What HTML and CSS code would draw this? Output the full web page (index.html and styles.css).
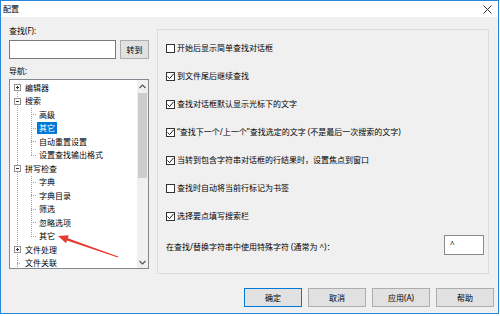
FILE: index.html
```html
<!DOCTYPE html>
<html lang="zh-CN">
<head>
<meta charset="utf-8">
<title>配置</title>
<link rel="stylesheet" href="styles.css">
</head>
<body>
<div class="window">
  <div class="titlebar">
    <span class="title">配置</span>
    <svg class="close" width="9" height="9" viewBox="0 0 9 9"><path d="M0.5 0.5L8.5 8.5M8.5 0.5L0.5 8.5" stroke="#333" stroke-width="1"/></svg>
  </div>
  <div class="content">
    <div class="left">
      <div class="label first">查找(F):</div>
      <div class="findrow">
        <div class="input"></div>
        <div class="btn small">转到</div>
      </div>
      <div class="label nav">导航:</div>
      <div class="tree">
        <div class="tree-list">
          <div class="row root"><svg class="exp" width="7" height="7" viewBox="0 0 7 7"><rect x="0.5" y="0.5" width="6" height="6" fill="#fff" stroke="#919191"/><path d="M2 3.5H5M3.5 2V5" stroke="#333"/></svg><span class="lbl">编辑器</span></div>
          <div class="row root"><svg class="exp" width="7" height="7" viewBox="0 0 7 7"><rect x="0.5" y="0.5" width="6" height="6" fill="#fff" stroke="#919191"/><path d="M2 3.5H5" stroke="#333"/></svg><span class="lbl">搜索</span></div>
          <div class="children">
            <div class="row child"><span class="stub"></span><span class="lbl">高级</span></div>
            <div class="row child"><span class="stub"></span><span class="lbl sel">其它</span></div>
            <div class="row child"><span class="stub"></span><span class="lbl">自动重置设置</span></div>
            <div class="row child"><span class="stub"></span><span class="lbl">设置查找输出格式</span></div>
          </div>
          <div class="row root"><svg class="exp" width="7" height="7" viewBox="0 0 7 7"><rect x="0.5" y="0.5" width="6" height="6" fill="#fff" stroke="#919191"/><path d="M2 3.5H5" stroke="#333"/></svg><span class="lbl">拼写检查</span></div>
          <div class="children">
            <div class="row child"><span class="stub"></span><span class="lbl">字典</span></div>
            <div class="row child"><span class="stub"></span><span class="lbl">字典目录</span></div>
            <div class="row child"><span class="stub"></span><span class="lbl">筛选</span></div>
            <div class="row child"><span class="stub"></span><span class="lbl">忽略选项</span></div>
            <div class="row child"><span class="stub"></span><span class="lbl">其它</span></div>
          </div>
          <div class="row root"><svg class="exp" width="7" height="7" viewBox="0 0 7 7"><rect x="0.5" y="0.5" width="6" height="6" fill="#fff" stroke="#919191"/><path d="M2 3.5H5M3.5 2V5" stroke="#333"/></svg><span class="lbl">文件处理</span></div>
          <div class="row root leaf"><span class="rstub"></span><span class="lbl">文件关联</span></div>
        </div>
        <div class="scrollbar">
          <svg class="arrow" width="7" height="5" viewBox="0 0 7 5"><path d="M0.5 4L3.5 1L6.5 4" fill="none" stroke="#555" stroke-width="1.2"/></svg>
          <div class="track"><div class="thumb"></div></div>
          <svg class="arrow" width="7" height="5" viewBox="0 0 7 5"><path d="M0.5 1L3.5 4L6.5 1" fill="none" stroke="#555" stroke-width="1.2"/></svg>
        </div>
      </div>
    </div>
    <div class="group">
      <div class="check"><span class="box"></span><span>开始后显示简单查找对话框</span></div>
      <div class="check"><span class="box"><svg width="9" height="9" viewBox="0 0 9 9"><path d="M1.5 4.5L3.6 6.6L7.6 1.8" fill="none" stroke="#222" stroke-width="1"/></svg></span><span>到文件尾后继续查找</span></div>
      <div class="check"><span class="box"><svg width="9" height="9" viewBox="0 0 9 9"><path d="M1.5 4.5L3.6 6.6L7.6 1.8" fill="none" stroke="#222" stroke-width="1"/></svg></span><span>查找对话框默认显示光标下的文字</span></div>
      <div class="check"><span class="box"><svg width="9" height="9" viewBox="0 0 9 9"><path d="M1.5 4.5L3.6 6.6L7.6 1.8" fill="none" stroke="#222" stroke-width="1"/></svg></span><span>“查找下一个/上一个”查找选定的文字 (不是最后一次搜索的文字)</span></div>
      <div class="check"><span class="box"><svg width="9" height="9" viewBox="0 0 9 9"><path d="M1.5 4.5L3.6 6.6L7.6 1.8" fill="none" stroke="#222" stroke-width="1"/></svg></span><span>当转到包含字符串对话框的行结果时，设置焦点到窗口</span></div>
      <div class="check"><span class="box"></span><span>查找时自动将当前行标记为书签</span></div>
      <div class="check"><span class="box"><svg width="9" height="9" viewBox="0 0 9 9"><path d="M1.5 4.5L3.6 6.6L7.6 1.8" fill="none" stroke="#222" stroke-width="1"/></svg></span><span>选择要点填写搜索栏</span></div>
      <div class="special">
        <span class="special-label">在查找/替换字符串中使用特殊字符 (通常为 ^)：</span>
        <div class="caret-input">^</div>
      </div>
    </div>
  </div>
  <div class="buttons">
    <div class="btn focus">确定</div>
    <div class="btn">取消</div>
    <div class="btn">应用(A)</div>
    <div class="btn">帮助</div>
  </div>
  <svg class="red-arrow" width="500" height="316" viewBox="0 0 500 316">
    <polygon points="58,236 68.7,235.3 67.8,238.2 118.2,256.5 117.9,257.5 67.0,240.4 66.1,243.2" fill="#e53a2f"/>
  </svg>
</div>
</body>
</html>
```
FILE: styles.css
```css
* { box-sizing: border-box; }
html, body {
  margin: 0;
  padding: 0;
  width: 500px;
  height: 316px;
  background: #fff;
  overflow: hidden;
}
body {
  font-family: "Noto Sans", "Noto Sans CJK SC", sans-serif;
  font-size: 8px;
  line-height: 12px;
  color: #000;
}
.window {
  position: relative;
  width: 499px;
  height: 314px;
  border: 1px solid #2a86d8;
  background: #f0f0f0;
}
.titlebar {
  height: 16px;
  background: #fff;
  display: flex;
  align-items: center;
  justify-content: space-between;
  padding: 0 6px 0 2px;
}
.title { font-size: 8px; line-height: 12px; }
.close { display: block; }
.content {
  display: flex;
  align-items: flex-start;
  padding-left: 8px;
  gap: 8px;
}
.left {
  width: 140px;
  display: flex;
  flex-direction: column;
}
.label { height: 12px; }
.label.first { margin-top: 8px; }
.label.nav { margin-top: 6px; }
.findrow {
  display: flex;
  gap: 4px;
  margin-top: 3px;
}
.input {
  width: 107px;
  height: 19px;
  background: #fff;
  border: 1px solid #7a7a7a;
}
.btn {
  height: 19px;
  width: 58px;
  background: #e1e1e1;
  border: 1px solid #adadad;
  display: flex;
  align-items: center;
  justify-content: center;
}
.btn.small { width: 29px; }
.btn.focus { border-color: #0078d7; }
.tree {
  margin-top: 2px;
  height: 190px;
  border: 1px solid #828790;
  background: #fff;
  display: flex;
  overflow: hidden;
}
.tree-list {
  flex: 1;
  padding-top: 1px;
  background-image: repeating-linear-gradient(to bottom, #a0a0a0 0 1px, transparent 1px 2px);
  background-size: 1px 100%;
  background-position: 7px 8px;
  background-repeat: no-repeat;
}
.row {
  height: 13.5px;
  display: flex;
  align-items: center;
  white-space: nowrap;
}
.row.root { padding-left: 4px; gap: 4px; }
.exp { display: block; flex: none; }
.rstub {
  width: 7px;
  height: 1px;
  flex: none;
  background-image: repeating-linear-gradient(to right, #a0a0a0 0 1px, transparent 1px 2px);
  background-size: 4px 1px;
  background-position: 3px 0;
  background-repeat: no-repeat;
}
.children {
  background-image: repeating-linear-gradient(to bottom, #a0a0a0 0 1px, transparent 1px 2px);
  background-size: 1px calc(100% - 6.5px);
  background-position: 21px 0;
  background-repeat: no-repeat;
}
.row.child { padding-left: 21px; }
.stub {
  width: 6px;
  height: 1px;
  flex: none;
  background-image: repeating-linear-gradient(to right, #a0a0a0 0 1px, transparent 1px 2px);
}
.lbl { padding: 0 2px; line-height: 12px; }
.row.root .lbl { padding: 0; }
.lbl.sel { background: #0078d7; color: #fff; }
.scrollbar {
  width: 11px;
  flex: none;
  background: #f0f0f0;
  display: flex;
  flex-direction: column;
  align-items: center;
}
.arrow { display: block; margin: 4px 0 3px; }
.track { flex: 1; width: 100%; padding: 0 1px; }
.thumb { height: 85px; margin-top: 1px; background: #cdcdcd; }
.group {
  margin-top: 12px;
  width: 332px;
  height: 245px;
  border: 1px solid #dcdcdc;
  padding: 4px 4px 0 8px;
}
.check {
  height: 28px;
  display: flex;
  align-items: center;
  gap: 2px;
  white-space: nowrap;
}
.box {
  width: 9px;
  height: 9px;
  flex: none;
  background: #fff;
  border: 1px solid #333;
  display: flex;
  align-items: center;
  justify-content: center;
}
.box svg { display: block; flex: none; }
.special {
  margin-top: 5px;
  display: flex;
  align-items: center;
  justify-content: space-between;
}
.special-label { padding-top: 3px; }
.caret-input {
  width: 40px;
  height: 20px;
  background: #fff;
  border: 1px solid #8a8a8a;
  padding: 2px 5px;
  line-height: 12px;
}
.buttons {
  display: flex;
  justify-content: flex-end;
  gap: 6px;
  margin-top: 14px;
  padding-right: 4px;
}
.red-arrow {
  position: absolute;
  left: -1px;
  top: -1px;
  pointer-events: none;
}
```
